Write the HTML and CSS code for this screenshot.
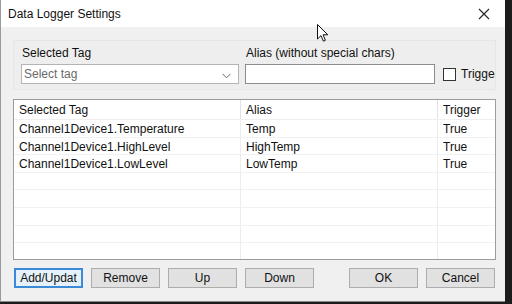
FILE: index.html
```html
<!DOCTYPE html>
<html>
<head>
<meta charset="utf-8">
<link rel="stylesheet" href="styles.css">
</head>
<body>
<div class="dialog">
  <div class="titlebar">
    <span class="title">Data Logger Settings</span>
    <svg class="close" width="12" height="12" viewBox="0 0 12 12"><path d="M1 1 L11 11 M11 1 L1 11" stroke="#222" stroke-width="1.1" fill="none"/></svg>
  </div>
  <div class="content">
    <div class="group">
      <div class="field tagfield">
        <label class="lbl">Selected Tag</label>
        <div class="combo"><span class="placeholder">Select tag</span>
          <svg class="chev" width="9" height="6" viewBox="0 0 9 6"><path d="M0.5 0.8 L4.5 4.8 L8.5 0.8" stroke="#666" stroke-width="1" fill="none"/></svg>
        </div>
      </div>
      <div class="field aliasfield">
        <label class="lbl">Alias (without special chars)</label>
        <div class="textbox"></div>
      </div>
      <div class="field trigfield">
        <span class="check"></span><span class="checklbl">Trigger</span>
      </div>
    </div>
    <div class="grid">
      <div class="row head"><span class="c1">Selected Tag</span><span class="c2">Alias</span><span class="c3">Trigger</span></div>
      <div class="row"><span class="c1">Channel1Device1.Temperature</span><span class="c2">Temp</span><span class="c3">True</span></div>
      <div class="row"><span class="c1">Channel1Device1.HighLevel</span><span class="c2">HighTemp</span><span class="c3">True</span></div>
      <div class="row"><span class="c1">Channel1Device1.LowLevel</span><span class="c2">LowTemp</span><span class="c3">True</span></div>
      <div class="row"><span class="c1"></span><span class="c2"></span><span class="c3"></span></div>
      <div class="row"><span class="c1"></span><span class="c2"></span><span class="c3"></span></div>
      <div class="row"><span class="c1"></span><span class="c2"></span><span class="c3"></span></div>
      <div class="row"><span class="c1"></span><span class="c2"></span><span class="c3"></span></div>
      <div class="row last"><span class="c1"></span><span class="c2"></span><span class="c3"></span></div>
    </div>
    <div class="buttons">
      <button class="btn focus">Add/Updat</button>
      <button class="btn">Remove</button>
      <button class="btn">Up</button>
      <button class="btn">Down</button>
      <button class="btn push">OK</button>
      <button class="btn">Cancel</button>
    </div>
  </div>
  <svg class="cursor" width="12" height="19" viewBox="0 0 12 19"><path d="M0.5 0.5 L0.5 15 L4 11.6 L6.4 17.2 L8.4 16.3 L6.1 10.8 L10.8 10.8 Z" fill="#fff" stroke="#111" stroke-width="1" stroke-linejoin="round"/></svg>
</div>
</body>
</html>
```
FILE: styles.css
```css
html, body {
  margin: 0;
  padding: 0;
}
body {
  width: 512px;
  height: 304px;
  background: #1c1c1c;
  overflow: hidden;
  font-family: "Liberation Sans", Arial, sans-serif;
  font-size: 12px;
  color: #111;
}
.dialog {
  position: relative;
  width: 505px;
  height: 302px;
  background: #f0f0f0;
  border-left: 1px solid #9a9a9a;
  border-bottom: 1px solid #8a8a8a;
  box-sizing: border-box;
}
.titlebar {
  height: 27px;
  background: #fff;
  display: flex;
  align-items: center;
  justify-content: space-between;
  padding: 0 15px 0 7px;
}
.title {
  font-size: 12px;
  color: #111;
}
.close {
  display: block;
}
.content {
  padding: 13px 9px 0 12px;
}
.group {
  height: 50px;
  box-sizing: border-box;
  border: 1px solid #e6e6e6;
  background: #eeeeee;
  display: flex;
  align-items: flex-start;
  padding: 5px 0 0 7px;
  overflow: hidden;
}
.field {
  display: flex;
  flex-direction: column;
  flex-shrink: 0;
}
.lbl {
  height: 18px;
  line-height: 14px;
  padding-left: 1px;
}
.tagfield { width: 218px; }
.aliasfield { width: 190px; margin-left: 6px; }
.combo {
  position: relative;
  height: 20px;
  box-sizing: border-box;
  border: 1px solid #b4b4b4;
  background: #fff;
  display: flex;
  align-items: center;
  padding-left: 2px;
}
.placeholder {
  color: #6a6a6a;
}
.chev {
  position: absolute;
  right: 7px;
  top: 8px;
}
.textbox {
  height: 20px;
  box-sizing: border-box;
  border: 1px solid #8c8c8c;
  background: #fff;
}
.trigfield {
  flex-direction: row;
  align-items: center;
  margin-top: 21px;
  margin-left: 8px;
  gap: 5px;
  white-space: nowrap;
}
.check {
  width: 13px;
  height: 13px;
  box-sizing: border-box;
  border: 1px solid #333;
  background: #fff;
}
.grid {
  margin-top: 9px;
  height: 161px;
  box-sizing: border-box;
  border: 1px solid #9c9c9c;
  background: #fff;
  overflow: hidden;
}
.row {
  display: grid;
  grid-template-columns: 227px 197px 1fr;
  height: 17.6px;
  line-height: 18px;
  border-bottom: 1px solid #f1f1f1;
  box-sizing: border-box;
}
.row.head {
  height: 20px;
  line-height: 21px;
  border-bottom: 1px solid #efefef;
}
.row.last { border-bottom: none; }
.row span {
  padding-left: 5px;
  white-space: nowrap;
  overflow: hidden;
}
.c1, .c2 {
  border-right: 1px solid #ededed;
}
.head .c1, .head .c2 {
  border-right-color: #e2e2e2;
}
.buttons {
  display: flex;
  gap: 8px;
  margin-top: 8px;
  padding-left: 1px;
}
.btn {
  width: 69px;
  height: 20px;
  box-sizing: border-box;
  border: 1px solid #adadad;
  background: #e1e1e1;
  font-family: "Liberation Sans", Arial, sans-serif;
  font-size: 12px;
  color: #111;
  padding: 0;
}
.btn.focus {
  border: 2px solid #3c8ad6;
  background: #e5f1fb;
}
.push {
  margin-left: 27px;
}
.cursor {
  position: absolute;
  left: 316px;
  top: 24px;
}
```
